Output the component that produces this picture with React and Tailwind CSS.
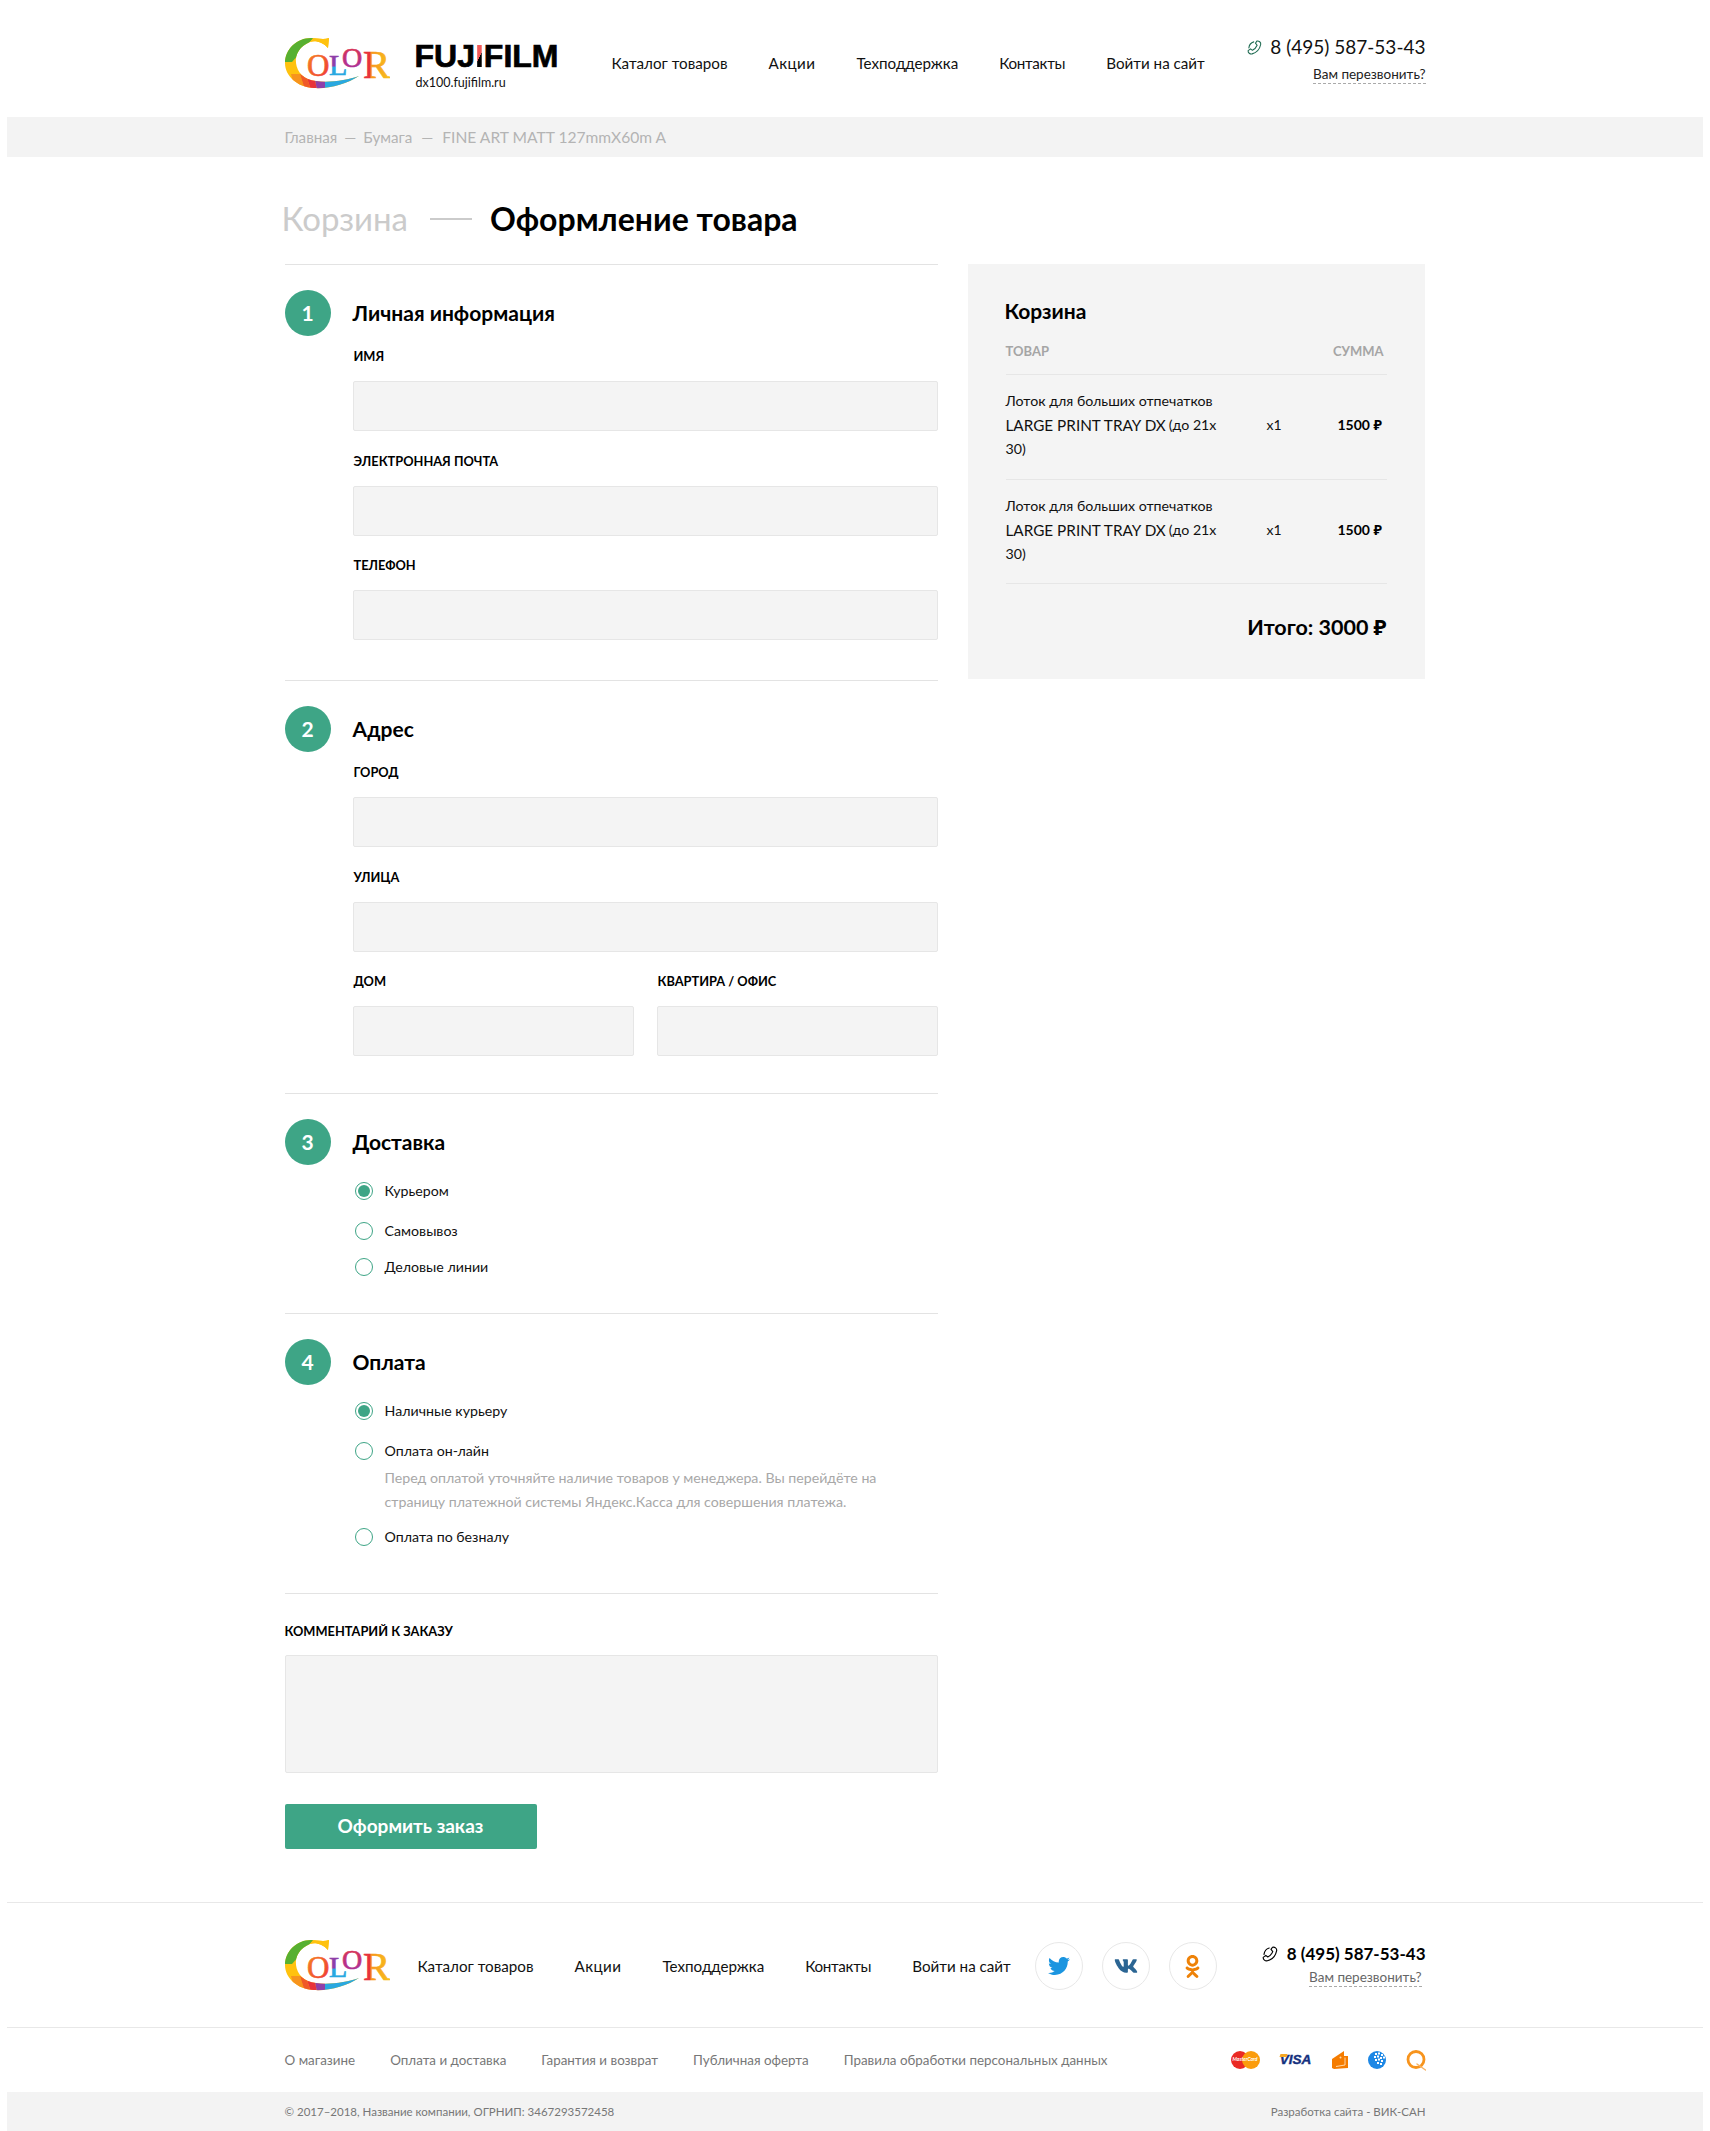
import React from "react";
import { FaTwitter, FaVk, FaOdnoklassniki } from "react-icons/fa";

const Logo = ({ id }) => (
  <svg width="105" height="52" viewBox="0 0 105 52" className="block">
    <defs>
      <clipPath id={`${id}-c`}>
        <path d="M44 0 L43 10 C38 4 30 2 25 4 C15 8 10 16 11 25 C12 34 19 42 31 43 C45 45 62 42 74 38 C62 46 44 51 29 50 C12 49 0 38 0 25 C0 11 12 0 26 0 C32 0 38 2 44 0Z" />
      </clipPath>
      <linearGradient id={`${id}-a`} x1="0" x2="1" y1="0" y2="0.4">
        <stop offset="0" stopColor="#f7941d" />
        <stop offset="0.55" stopColor="#ee2e3a" />
        <stop offset="1" stopColor="#e8336d" />
      </linearGradient>
      <linearGradient id={`${id}-b`} x1="0" x2="0" y1="0" y2="1">
        <stop offset="0" stopColor="#8e3fa8" />
        <stop offset="0.55" stopColor="#8e3fa8" />
        <stop offset="0.56" stopColor="#29a8e0" />
        <stop offset="1" stopColor="#29a8e0" />
      </linearGradient>
      <linearGradient id={`${id}-o`} x1="0" x2="0" y1="0" y2="1">
        <stop offset="0" stopColor="#e8333a" />
        <stop offset="0.5" stopColor="#b4308f" />
        <stop offset="1" stopColor="#7a3fb0" />
      </linearGradient>
      <linearGradient id={`${id}-r`} x1="0" x2="1" y1="0" y2="0">
        <stop offset="0" stopColor="#29a8e0" />
        <stop offset="0.35" stopColor="#29a8e0" />
        <stop offset="0.36" stopColor="#e8333a" />
        <stop offset="0.75" stopColor="#e8333a" />
        <stop offset="0.76" stopColor="#f7941d" />
        <stop offset="1" stopColor="#f7c41d" />
      </linearGradient>
    </defs>
    <g clipPath={`url(#${id}-c)`}>
      <rect width="80" height="52" fill="#ffc20e" />
      <polygon points="-2,-2 30,-2 7,24 -2,24" fill="#57b031" />
      <polygon points="30,-2 46,-2 46,10 20,10" fill="#ffc20e" />
      <polygon points="6,36 15,36 20,52 10,52" fill="#f7941d" />
      <polygon points="15,36 22,40 26,52 20,52" fill="#f05a28" />
      <polygon points="22,40 30,42 32,52 26,52" fill="#e8333a" />
      <polygon points="30,42 40,43 40,52 32,52" fill="#8e3fa8" />
      <polygon points="40,42 80,34 80,52 40,52" fill="#29a8e0" />
    </g>
    <text fontFamily="'Liberation Serif', serif" strokeWidth="0.7">
      <tspan x="22" y="38" fontSize="31" fill={`url(#${id}-a)`} stroke={`url(#${id}-a)`}>O</tspan>
      <tspan x="44" y="37" fontSize="30" fill={`url(#${id}-b)`} stroke={`url(#${id}-b)`}>L</tspan>
      <tspan x="57" y="29" fontSize="28" fill={`url(#${id}-o)`} stroke={`url(#${id}-o)`}>O</tspan>
      <tspan x="78" y="40" fontSize="41" fill={`url(#${id}-r)`} stroke={`url(#${id}-r)`}>R</tspan>
    </text>
  </svg>
);

const PhoneIcon = ({ className }) => (
  <svg viewBox="0 0 16 16" className={className} fill="none" stroke="currentColor" strokeWidth="1.15" strokeLinecap="round" strokeLinejoin="round">
    <path d="M10.5 1.2 C12.5 0.6 15.2 2.4 14.6 4.8 C13.6 9.6 9.8 13.6 5.4 14.8 C3.2 15.3 1 13.6 1.2 11.4 L3.8 9.4 L5.8 11 C8.2 9.8 9.8 8 10.8 5.6 L9 3.4 Z" />
    <path d="M7.2 2 C4.4 2.8 2.4 5.2 2 8.4" />
  </svg>
);

const Nav = () => (
  <nav className="flex gap-[41px] text-[15.2px] leading-5 text-[#111]">
    <a>Каталог товаров</a>
    <a className="tracking-[0.45px]">Акции</a>
    <a>Техподдержка</a>
    <a className="tracking-[-0.3px]">Контакты</a>
    <a>Войти на сайт</a>
  </nav>
);

const Label = ({ children }) => (
  <label className="block pl-[1px] text-[12.8px] leading-[18px] font-bold uppercase text-black">{children}</label>
);

const Input = () => <div className="h-[50px] mt-4 bg-[#f4f4f4] border border-[#e6e6e6] rounded-[2px]" />;

const Field = ({ label, className = "" }) => (
  <div className={className}>
    <Label>{label}</Label>
    <Input />
  </div>
);

const StepHead = ({ n, title }) => (
  <div className="flex items-center gap-[22px]">
    <div className="w-[46px] h-[46px] rounded-full bg-[#3ea586] text-white text-[21px] font-bold flex items-center justify-center">{n}</div>
    <h3 className="text-[21px] font-bold text-black leading-7">{title}</h3>
  </div>
);

const Radio = ({ checked, children, className = "" }) => (
  <div className={`flex items-center gap-[12px] text-[14.2px] leading-5 text-[#111] ${className}`}>
    <span className="w-[18px] h-[18px] rounded-full border border-[#3ea586] flex items-center justify-center shrink-0 ml-[2px]">
      {checked && <span className="w-3 h-3 rounded-full bg-[#3ea586]" />}
    </span>
    {children}
  </div>
);

const CartRow = ({ className = "" }) => (
  <div className={`flex items-center border-t border-[#e6e6e6] pt-[14px] ${className}`}>
    <div className="w-[216px] text-[14.2px] leading-6 text-[#111]">
      <div>Лоток для больших отпечатков</div>
      <div className="flex gap-[3px] whitespace-nowrap">
        <span className="text-[15.3px]">LARGE PRINT TRAY DX</span>
        <span>(до 21х</span>
      </div>
      <div>30)</div>
    </div>
    <div className="ml-[45px] w-[71px] text-sm text-[#111]">х1</div>
    <div className="text-sm font-bold text-black">1500 ₽</div>
  </div>
);

const Mastercard = () => (
  <div className="relative w-[29px] h-[18px]">
    <span className="absolute left-0 top-0 w-[18px] h-[18px] rounded-full bg-[#ea2a24]" />
    <span className="absolute right-0 top-0 w-[18px] h-[18px] rounded-full bg-[#fb9c0c]" />
    <span className="absolute inset-0 flex items-center justify-center text-[5px] font-bold italic text-white">MasterCard</span>
  </div>
);

const Visa = () => (
  <div className="relative w-[32px] h-[18px] flex items-center justify-center">
    <span className="absolute left-0 top-[3px] w-[7px] h-[3px] bg-[#f7a823] skew-x-[-20deg]" />
    <span className="font-['Liberation_Sans',sans-serif] text-[13.5px] font-bold italic leading-none text-[#14307e] [-webkit-text-stroke:0.4px_#14307e]">VISA</span>
  </div>
);

const Wallet = () => (
  <svg width="16" height="18" viewBox="0 0 16 18">
    <path d="M0 8 L12 0 L12 5 L16 5 L16 17 L2 18 L0 17 Z" fill="#f57c00" />
    <circle cx="8.5" cy="6.5" r="1" fill="#ffd9a8" />
    <path d="M4 15.5 L13 14 L13 6.5" fill="none" stroke="#ffe2bd" strokeWidth="0.9" />
  </svg>
);

const Webmoney = () => (
  <svg width="18" height="18" viewBox="0 0 18 18">
    <circle cx="9" cy="9" r="9" fill="#1e88e5" />
    <g fill="#fff">
      <rect x="7" y="2" width="2" height="2" />
      <rect x="10" y="1.5" width="2" height="2" />
      <rect x="13" y="3" width="2" height="2" />
      <rect x="6" y="5" width="2" height="2" />
      <rect x="9" y="4.5" width="2" height="2" />
      <rect x="12" y="6" width="2" height="2" />
      <rect x="15" y="5.5" width="2" height="2" />
      <rect x="7" y="8" width="2" height="2" />
      <rect x="10" y="7.5" width="2" height="2" />
      <rect x="13" y="9" width="2" height="2" />
      <rect x="9" y="11" width="2" height="2" />
      <rect x="12" y="12" width="2" height="2" />
    </g>
  </svg>
);

const Qiwi = () => (
  <svg width="20" height="21" viewBox="0 0 20 21" fill="none">
    <circle cx="10" cy="9.5" r="8" stroke="#f7941d" strokeWidth="2.8" />
    <path d="M11 14 L19.5 20" stroke="#f7b261" strokeWidth="1.4" strokeLinecap="round" />
  </svg>
);

const Social = ({ children }) => (
  <a className="w-12 h-12 rounded-full border border-[#e8e8e8] flex items-center justify-center">{children}</a>
);

const App = () => {
  return (
    <div className="px-[7px] bg-white font-['Lato','Noto_Sans',sans-serif] text-black h-[2131px] overflow-hidden">
      {/* Header */}
      <header className="w-[1141px] mx-auto h-[117px] flex">
        <div className="pt-[38px] w-[130px] shrink-0">
          <Logo id="top" />
        </div>
        <div className="pt-[38px] w-[197px] shrink-0">
          <div className="flex font-['Liberation_Sans',sans-serif] font-bold text-[32px] leading-[36px] text-black">
            <span className="[-webkit-text-stroke:0.7px_black]">FUJ</span>
            <span className="bg-[linear-gradient(115deg,#f15a5a_52%,#000_52%)] bg-clip-text text-transparent">I</span>
            <span className="[-webkit-text-stroke:0.7px_black]">FILM</span>
          </div>
          <div className="text-[12.5px] leading-4 mt-[1px] ml-[1px] text-[#111]">dx100.fujifilm.ru</div>
        </div>
        <div className="pt-[53px]">
          <Nav />
        </div>
        <div className="ml-auto pt-[33px] flex flex-col items-end">
          <div className="flex items-center gap-[8px] text-[19px] leading-7 text-[#111]">
            <PhoneIcon className="w-[15px] h-[15px] text-[#1f6b52]" />
            8 (495) 587-53-43
          </div>
          <a className="mt-[4px] text-[13.5px] leading-[18px] text-[#222] border-b border-dashed border-[#aaa]">Вам перезвонить?</a>
        </div>
      </header>

      {/* Breadcrumbs */}
      <div className="h-10 bg-[#f3f3f3]">
        <div className="w-[1141px] mx-auto h-10 pt-[1px] flex items-center text-[15.2px] text-[#b4b4b4]">
          <span>Главная</span>
          <span className="mx-[7px]">—</span>
          <span>Бумага</span>
          <span className="mx-[9px]">—</span>
          <span className="text-[15.6px]">FINE ART MATT 127mmX60m A</span>
        </div>
      </div>

      <div className="w-[1141px] mx-auto">
        <div className="h-[107px] flex items-center pt-[17px]">
          <span className="-ml-[3px] text-[33px] text-[#cbcbcb]">Корзина</span>
          <span className="w-[42px] h-[2px] bg-[#cbcbcb] ml-[22px] mr-[18px]" />
          <h1 className="text-[32px] font-bold text-black">Оформление товара</h1>
        </div>

        <div className="flex gap-[30px] items-start">
          {/* Form */}
          <div className="w-[653px] shrink-0">
            <section className="border-t border-[#e3e3e3] pt-[25px] h-[416px]">
              <StepHead n="1" title="Личная информация" />
              <div className="ml-[68px] mt-[11px]">
                <Field label="Имя" />
                <Field label="Электронная почта" className="mt-[21px]" />
                <Field label="Телефон" className="mt-5" />
              </div>
            </section>

            <section className="border-t border-[#e3e3e3] pt-[25px] h-[413px]">
              <StepHead n="2" title="Адрес" />
              <div className="ml-[68px] mt-[11px]">
                <Field label="Город" />
                <Field label="Улица" className="mt-[21px]" />
                <div className="grid grid-cols-2 gap-[23px] mt-5">
                  <Field label="Дом" />
                  <Field label="Квартира / офис" />
                </div>
              </div>
            </section>

            <section className="border-t border-[#e3e3e3] pt-[25px] h-[220px]">
              <StepHead n="3" title="Доставка" />
              <div className="ml-[68px] mt-4">
                <Radio checked>Курьером</Radio>
                <Radio className="mt-5">Самовывоз</Radio>
                <Radio className="mt-4">Деловые линии</Radio>
              </div>
            </section>

            <section className="border-t border-[#e3e3e3] pt-[25px] h-[280px]">
              <StepHead n="4" title="Оплата" />
              <div className="ml-[68px] mt-4">
                <Radio checked>Наличные курьеру</Radio>
                <Radio className="mt-5">Оплата он-лайн</Radio>
                <p className="ml-[32px] mt-[5px] w-[530px] text-[14.2px] leading-6 text-[#a8a8a8]">
                  Перед оплатой уточняйте наличие товаров у менеджера. Вы перейдёте на страницу платежной системы Яндекс.Касса для совершения платежа.
                </p>
                <Radio className="mt-[13px]">Оплата по безналу</Radio>
              </div>
            </section>

            <section className="border-t border-[#e3e3e3] pt-[28px]">
              <label className="block text-[12.8px] leading-[18px] font-bold uppercase text-black">Комментарий к заказу</label>
              <div className="h-[118px] mt-[15px] bg-[#f4f4f4] border border-[#e6e6e6] rounded-[2px]" />
              <button className="mt-[31px] w-[252px] h-[45px] rounded-[2px] bg-[#3ea586] text-white text-[19px] font-bold">
                Оформить заказ
              </button>
            </section>
          </div>

          {/* Cart */}
          <aside className="w-[457px] h-[415px] bg-[#f4f4f4] pl-[37px] pr-[38px] pt-[33px]">
            <h3 className="text-[21px] font-bold leading-7 text-black">Корзина</h3>
            <div className="flex justify-between mt-[17px] h-[32px] pl-[1px] pr-[3px] text-[13px] leading-[18px] font-bold text-[#a5a5a5]">
              <span>ТОВАР</span>
              <span>СУММА</span>
            </div>
            <div className="pl-[1px]">
              <CartRow className="pb-[18px]" />
              <CartRow className="pb-[17px]" />
              <div className="border-t border-[#e6e6e6] pt-[27px] text-right text-[21.5px] leading-8 font-bold text-black">
                Итого: 3000 ₽
              </div>
            </div>
          </aside>
        </div>
      </div>

      {/* Footer */}
      <footer className="mt-[53px]">
        <div className="border-t border-[#e8e8e8] h-[125px]">
          <div className="w-[1141px] mx-auto flex pt-[37px]">
            <div className="w-[133px] shrink-0">
              <Logo id="bottom" />
            </div>
            <div className="pt-[16px]">
              <Nav />
            </div>
            <div className="flex gap-[19px] ml-[24px] pt-[2px]">
              <Social><FaTwitter className="text-[#1b95e0] text-[22px]" /></Social>
              <Social><FaVk className="text-[#2b6593] text-[24px]" /></Social>
              <Social><FaOdnoklassniki className="text-[#ee8208] text-[23px]" /></Social>
            </div>
            <div className="ml-auto pt-[2px] flex flex-col items-end">
              <div className="flex items-center gap-[9px] text-[17px] leading-6 font-bold text-black">
                <PhoneIcon className="w-[16px] h-[16px] text-black" />
                8 (495) 587-53-43
              </div>
              <a className="mt-[2px] mr-[4px] text-[13.5px] leading-[18px] text-[#666] border-b border-dashed border-[#aaa]">Вам перезвонить?</a>
            </div>
          </div>
        </div>
        <div className="border-t border-[#e8e8e8] h-[65px]">
          <div className="w-[1141px] mx-auto h-full flex items-center">
            <div className="flex gap-[35px] pt-[1px] text-[13.4px] text-[#777]">
              <a>О магазине</a>
              <a>Оплата и доставка</a>
              <a>Гарантия и возврат</a>
              <a>Публичная оферта</a>
              <a>Правила обработки персональных данных</a>
            </div>
            <div className="ml-auto flex items-center gap-[20px]">
              <Mastercard />
              <Visa />
              <Wallet />
              <Webmoney />
              <Qiwi />
            </div>
          </div>
        </div>
        <div className="h-[39px] bg-[#f3f3f3]">
          <div className="w-[1141px] mx-auto h-full flex items-center justify-between pt-[1px] text-[11.5px] text-[#777]">
            <span>© 2017–2018, Название компании, ОГРНИП: 3467293572458</span>
            <span>Разработка сайта - ВИК-САН</span>
          </div>
        </div>
      </footer>
    </div>
  );
};

export default App;
